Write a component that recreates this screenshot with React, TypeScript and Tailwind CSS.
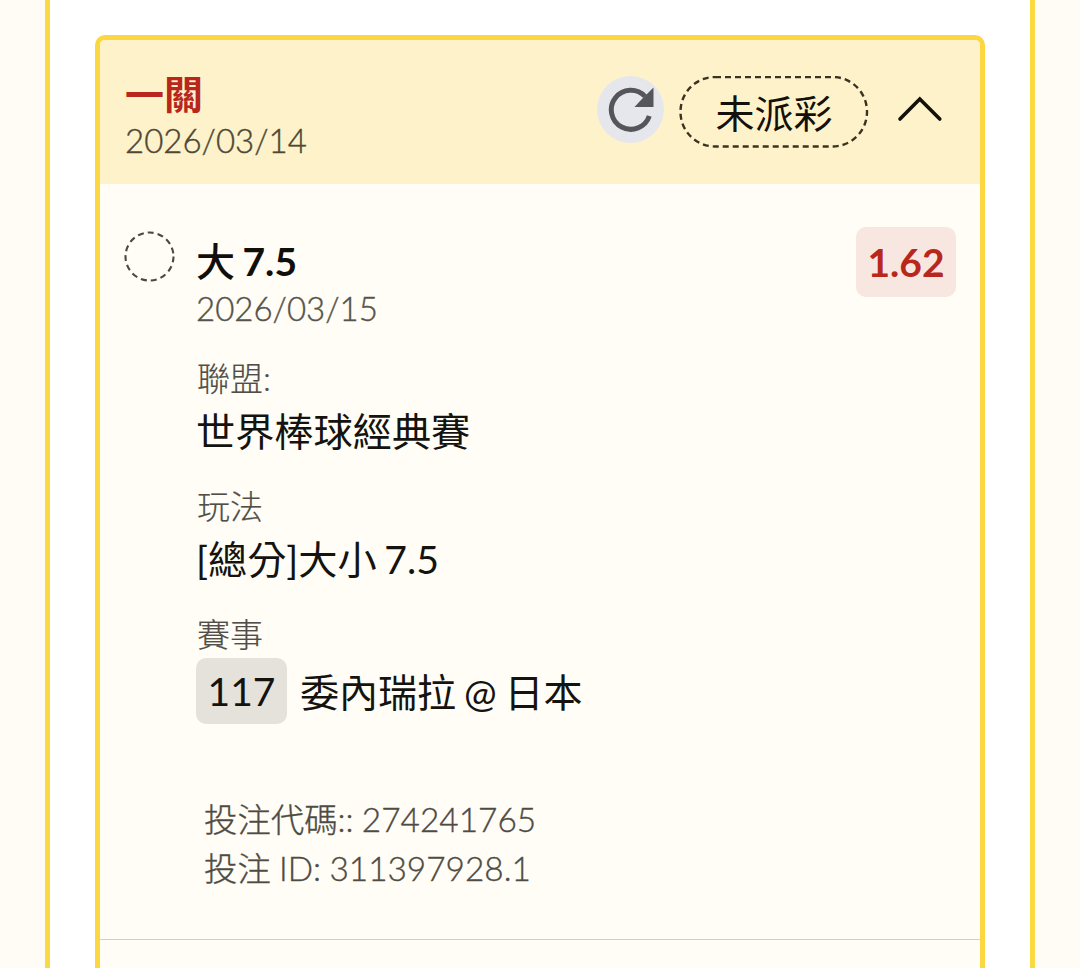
type Detail = {
  label: string;
  value: string;
};

const DETAILS: Detail[] = [
  { label: "聯盟:", value: "世界棒球經典賽" },
  { label: "玩法", value: "[總分]大小 7.5" },
];

function RefreshIcon() {
  return (
    <svg width="46" height="46" viewBox="0 0 46 46" fill="none">
      <path
        d="M41.3 29 A19.5 19.5 0 1 1 37 9.4"
        stroke="#55565a"
        strokeWidth="5"
      />
      <path d="M45.5 0.5V20H26.5L33 13Z" fill="#55565a" />
    </svg>
  );
}

function ChevronUp() {
  return (
    <svg width="46" height="28" viewBox="0 0 46 28" fill="none">
      <path d="M3 23 L22.8 3 L42.8 23" stroke="#14100a" strokeWidth="3.6" strokeLinecap="round" />
    </svg>
  );
}

function StatusPill({ text }: { text: string }) {
  return (
    <div className="relative flex h-[72px] w-[190px] items-center justify-center">
      <svg className="absolute inset-0" width="190" height="72" fill="none">
        <rect
          x="1.5"
          y="1"
          width="186.5"
          height="69.5"
          rx="34.5"
          stroke="#3a3320"
          strokeWidth="2.4"
          strokeDasharray="6 4"
        />
      </svg>
      <span className="pt-0.5 text-[39px] leading-[46px] text-[#14100a]">{text}</span>
    </div>
  );
}

function CardHeader() {
  return (
    <div className="flex h-36 items-start justify-between bg-[#fef2cb] pr-[37px] pl-[25px]">
      <div className="pt-[31px]">
        <h2 className="text-[39px] leading-[46px] font-bold text-[#b9271c]">一關</h2>
        <p className="mt-px text-[33px] leading-[44px] font-light text-[#4d4836] [-webkit-text-stroke:0.4px]">
          2026/03/14
        </p>
      </div>
      <div className="flex items-center pt-9">
        <div className="mr-[15px] mb-[5px] flex size-[67px] items-center justify-center rounded-full bg-[#e6e7ed]">
          <RefreshIcon />
        </div>
        <StatusPill text="未派彩" />
        <div className="mb-1 ml-7">
          <ChevronUp />
        </div>
      </div>
    </div>
  );
}

export default function App() {
  return (
    <div className="h-[968px] overflow-hidden bg-[#fffcf5] px-[45px] font-['Lato','Noto_Sans_CJK_TC',sans-serif]">
      <div className="h-full border-x-[5px] border-[#fbd940] bg-white px-[45px] pt-[35px]">
        <div className="h-[1000px] overflow-hidden rounded-t-[10px] border-[5px] border-[#fdd741] bg-[#fffdf5]">
          <CardHeader />

          {/* Selection */}
          <div className="flex h-[756px] items-start border-b border-[#d3d1c7] pr-[24px] pl-6">
            <svg className="mt-[47px]" width="52" height="52" fill="none">
              <circle cx="25.5" cy="25.5" r="24" stroke="#4a483f" strokeWidth="2.1" strokeDasharray="6 4.05" />
            </svg>

            <div className="ml-5 flex-1 pt-[54px]">
              <h3 className="text-[39px] leading-[46px] font-bold text-[#100f0c] [word-spacing:-2px]">
                <span className="font-medium">大</span> 7.5
              </h3>
              <p className="text-[33px] leading-[48px] font-light text-[#55534b] [-webkit-text-stroke:0.4px]">
                2026/03/15
              </p>

              <div className="mt-6 flex flex-col gap-6">
                {DETAILS.map((d) => (
                  <div key={d.label}>
                    <p className="pl-px text-[33px] leading-[44px] font-light text-[#504e47] [-webkit-text-stroke:0.2px]">
                      {d.label}
                    </p>
                    <p className="pt-px text-[39.2px] leading-[59px] text-[#14130f] [word-spacing:-2.5px]">{d.value}</p>
                  </div>
                ))}
                <div>
                  <p className="pl-px text-[33px] leading-[44px] font-light text-[#504e47] [-webkit-text-stroke:0.2px]">
                    賽事
                  </p>
                  <div className="mt-0.5 flex items-center text-[39px] leading-[66px] text-[#14130f]">
                    <span className="mr-[13px] w-[91px] rounded-[10px] bg-[#e5e2dc] text-center">117</span>
                    <span className="pt-[3px] leading-[63px] [word-spacing:-2px]">委內瑞拉 @ 日本</span>
                  </div>
                </div>
              </div>

              <div className="mt-[71px] ml-2 text-[33.4px] leading-[49px] font-light text-[#4d4b43] [-webkit-text-stroke:0.35px] [word-spacing:-0.8px]">
                <p>投注代碼:: 274241765</p>
                <p>投注 ID: 311397928.1</p>
              </div>
            </div>

            <div className="mt-[43px] flex h-[70px] w-[100px] items-center justify-center rounded-[10px] bg-[#f8e7e1] text-[39px] font-bold text-[#b9271c]">
              1.62
            </div>
          </div>
        </div>
      </div>
    </div>
  );
}
